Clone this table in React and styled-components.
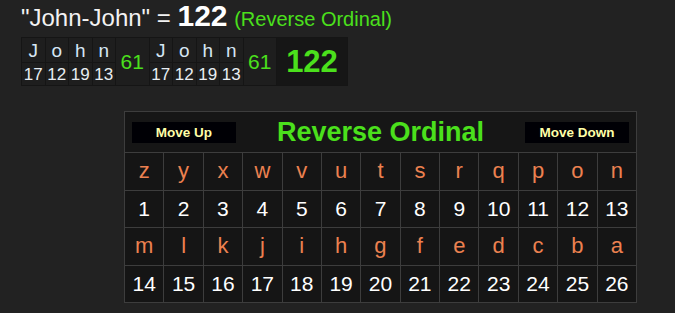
import styled, { createGlobalStyle } from "styled-components";

const GlobalStyle = createGlobalStyle`
  html, body {
    margin: 0;
    padding: 0;
    background: #222222;
  }
  body {
    font-family: "Liberation Sans", Arial, sans-serif;
  }
`;

const Page = styled.div`
  width: 675px;
  height: 313px;
  padding: 2px 0 0 21px;
  box-sizing: border-box;
  overflow: hidden;
`;

const Headline = styled.div`
  height: 28px;
  line-height: 28px;
  font-size: 24px;
  color: #f2f2f2;
  white-space: nowrap;
`;

const Total = styled.span`
  font-size: 30px;
  font-weight: bold;
  color: #ffffff;
`;

const CipherName = styled.span`
  font-size: 20px;
  color: #4be01c;
`;

const Breakdown = styled.table`
  margin-top: 7px;
  border-collapse: collapse;
  background: #1e1e1e;
  border: 1px solid #151515;
`;

const Cell = styled.td`
  padding: 0;
  border: 1px solid #151515;
  text-align: center;
  color: ${(p) => (p.$letter ? "#d6e6f4" : "#e8eef2")};
  font-size: ${(p) => (p.$letter ? "19px" : "17px")};
  width: 22.5px;
  height: ${(p) => (p.$letter ? "24px" : "22px")};
  line-height: 1;
`;

const WordSum = styled.td`
  padding: 0;
  border: 1px solid #151515;
  width: 32.5px;
  text-align: center;
  color: #4be01c;
  font-size: 21px;
`;

const GrandSum = styled.td`
  padding: 0;
  border: 1px solid #151515;
  width: 70px;
  text-align: center;
  background: #161616;
  color: #4be01c;
  font-size: 31px;
  font-weight: bold;
`;

const Chart = styled.div`
  margin: 25px 0 0 103px;
  width: 513px;
  border: 1px solid #3d3d3d;
  background: #161616;
  box-sizing: border-box;
`;

const ChartHead = styled.div`
  height: 40px;
  display: flex;
  align-items: center;
  justify-content: space-between;
  padding: 0 7px 0 7px;
  border-bottom: 1px solid #3d3d3d;
`;

const MoveButton = styled.div`
  width: 104px;
  height: 21px;
  background: #000005;
  color: #ffffa8;
  font-size: 13.5px;
  font-weight: bold;
  display: flex;
  align-items: center;
  justify-content: center;
`;

const ChartTitle = styled.div`
  color: #4be01c;
  font-size: 27px;
  font-weight: bold;
`;

const Grid = styled.div`
  display: grid;
  grid-template-columns: repeat(13, 1fr);
  grid-auto-rows: 36.5px;
  gap: 1px;
  background: #3d3d3d;
`;

const GridCell = styled.div`
  background: #151515;
  display: flex;
  align-items: center;
  justify-content: center;
  font-size: ${(p) => (p.$letter ? "22px" : "21px")};
  color: ${(p) => (p.$letter ? "#ec8150" : "#ffffff")};
`;

const word = [
  ["J", 17],
  ["o", 12],
  ["h", 19],
  ["n", 13],
];

const alphabet = "zyxwvutsrqponmlkjihgfedcba".split("");

export default function App() {
  const rows = [alphabet.slice(0, 13), alphabet.slice(13)];
  return (
    <Page>
      <GlobalStyle />
      <Headline>
        "John-John" = <Total>122</Total> <CipherName>(Reverse Ordinal)</CipherName>
      </Headline>
      <Breakdown>
        <tbody>
          <tr>
            {word.map(([l]) => (
              <Cell key={"a" + l} $letter>{l}</Cell>
            ))}
            <WordSum rowSpan={2}>61</WordSum>
            {word.map(([l]) => (
              <Cell key={"b" + l} $letter>{l}</Cell>
            ))}
            <WordSum rowSpan={2}>61</WordSum>
            <GrandSum rowSpan={2}>122</GrandSum>
          </tr>
          <tr>
            {word.map(([l, v]) => (
              <Cell key={"c" + l}>{v}</Cell>
            ))}
            {word.map(([l, v]) => (
              <Cell key={"d" + l}>{v}</Cell>
            ))}
          </tr>
        </tbody>
      </Breakdown>
      <Chart>
        <ChartHead>
          <MoveButton>Move Up</MoveButton>
          <ChartTitle>Reverse Ordinal</ChartTitle>
          <MoveButton>Move Down</MoveButton>
        </ChartHead>
        <Grid>
          {rows.map((row, r) => [
            ...row.map((l) => (
              <GridCell key={l} $letter>{l}</GridCell>
            )),
            ...row.map((l, i) => (
              <GridCell key={l + "n"}>{r * 13 + i + 1}</GridCell>
            )),
          ])}
        </Grid>
      </Chart>
    </Page>
  );
}
